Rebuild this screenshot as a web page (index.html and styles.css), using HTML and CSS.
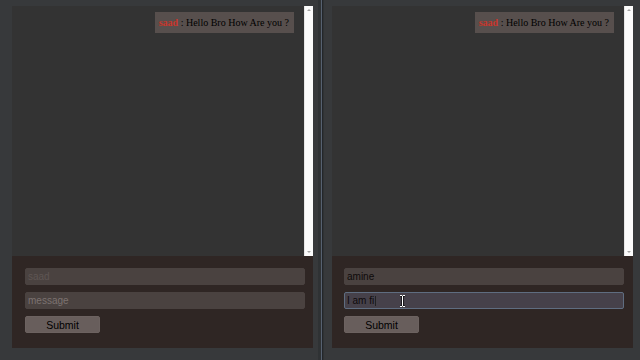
FILE: index.html
```html
<!DOCTYPE html>
<html>
<head>
<meta charset="utf-8">
<link rel="stylesheet" href="styles.css">
</head>
<body>
<div class="screen">
  <section class="pane pane-left">
    <div class="chat">
      <div class="messages">
        <div class="bubble"><span class="author">saad</span> : Hello Bro How Are you ?</div>
      </div>
      <div class="scrollbar"><span class="arrow up"></span><span class="arrow down"></span></div>
    </div>
    <form class="composer">
      <input class="field field-name" type="text" placeholder="saad">
      <input class="field field-msg" type="text" placeholder="message">
      <button class="submit" type="button">Submit</button>
    </form>
  </section>
  <div class="divider"><span class="line light"></span><span class="line dark"></span></div>
  <section class="pane pane-right">
    <div class="chat">
      <div class="messages">
        <div class="bubble"><span class="author">saad</span> : Hello Bro How Are you ?</div>
      </div>
      <div class="scrollbar"><span class="arrow up"></span><span class="arrow down"></span></div>
    </div>
    <form class="composer">
      <input class="field filled" type="text" value="amine">
      <div class="field-wrap">
        <input class="field filled focused" type="text" value="I am fi">
        <span class="caret"></span>
        <svg class="ibeam" width="7" height="12" viewBox="0 0 7 12"><path d="M1 0.5h2l0.5 0.5l0.5-0.5h2M3.5 1v10M1 11.5h2l0.5-0.5l0.5 0.5h2" stroke="#000" stroke-width="2.2" fill="none"/><path d="M1 0.5h2l0.5 0.5l0.5-0.5h2M3.5 1v10M1 11.5h2l0.5-0.5l0.5 0.5h2" stroke="#fff" stroke-width="1" fill="none"/></svg>
      </div>
      <button class="submit" type="button">Submit</button>
    </form>
  </section>
</div>
</body>
</html>
```
FILE: styles.css
```css
* { box-sizing: border-box; }
html, body { margin: 0; padding: 0; }
body {
  width: 640px;
  height: 360px;
  overflow: hidden;
  background: #37393b;
  font-family: "Liberation Sans", Arial, sans-serif;
}
.screen {
  display: flex;
  width: 640px;
  height: 360px;
}
.pane {
  display: flex;
  flex-direction: column;
  background: #37393b;
}
.pane-left {
  width: 318px;
  padding: 6px 5px 12px 12px;
}
.pane-right {
  width: 316px;
  padding: 6px 7px 12px 8px;
}
.divider {
  width: 6px;
  display: flex;
  background: #2f3234;
  padding-left: 3px;
}
.divider .line { width: 1px; height: 100%; }
.divider .light { background: #566170; }
.divider .dark { background: #23262a; }

.chat {
  height: 250px;
  display: flex;
  background: #333333;
}
.messages {
  flex: 1;
  display: flex;
  flex-direction: column;
  align-items: flex-end;
  padding: 6px 10px 0 0;
}
.bubble {
  background: #574f4d;
  color: #000;
  font-family: "Liberation Serif", "Times New Roman", serif;
  font-size: 10px;
  line-height: 11px;
  padding: 5px 5px 5px 4px;
  white-space: nowrap;
}
.author {
  color: #c8362c;
  font-weight: bold;
}
.scrollbar {
  width: 9px;
  background: #fbfbfb;
  position: relative;
  border-left: 1px solid #e6e6e6;
}
.arrow {
  position: absolute;
  left: 2px;
  width: 0;
  height: 0;
  border-left: 2px solid transparent;
  border-right: 2px solid transparent;
}
.arrow.up { top: 3px; border-bottom: 2px solid #a3a3a3; }
.arrow.down { bottom: 3px; border-top: 2px solid #a3a3a3; }

.composer {
  height: 92px;
  margin: 0;
  background: #2f2624;
  display: flex;
  flex-direction: column;
  gap: 7px;
  padding: 12px 8px 15px 13px;
}
.pane-right .composer { padding-left: 12px; }
.field {
  display: block;
  width: 280px;
  height: 17px;
  margin: 0;
  padding: 0 2px;
  border: 1px solid #4a4240;
  border-radius: 2px;
  background: #4a4240;
  font-family: "Liberation Sans", Arial, sans-serif;
  font-size: 10px;
  color: #0e0a0a;
  outline: none;
}
.field-name::placeholder { color: #5e5553; }
.field-msg::placeholder { color: #7c7270; }
.field.focused {
  background: #46414a;
  border-color: #5f6d80;
}
.field-wrap { position: relative; width: 280px; height: 17px; }
.caret {
  position: absolute;
  left: 31px;
  top: 4px;
  width: 1px;
  height: 10px;
  background: #222;
}
.ibeam {
  position: absolute;
  left: 55px;
  top: 3px;
}
.submit {
  width: 75px;
  height: 17px;
  margin: 0;
  padding: 0;
  border: 1px solid #6c6260;
  border-radius: 2px;
  background: #685e5c;
  font-family: "Liberation Sans", Arial, sans-serif;
  font-size: 10.5px;
  color: #000;
}
```
